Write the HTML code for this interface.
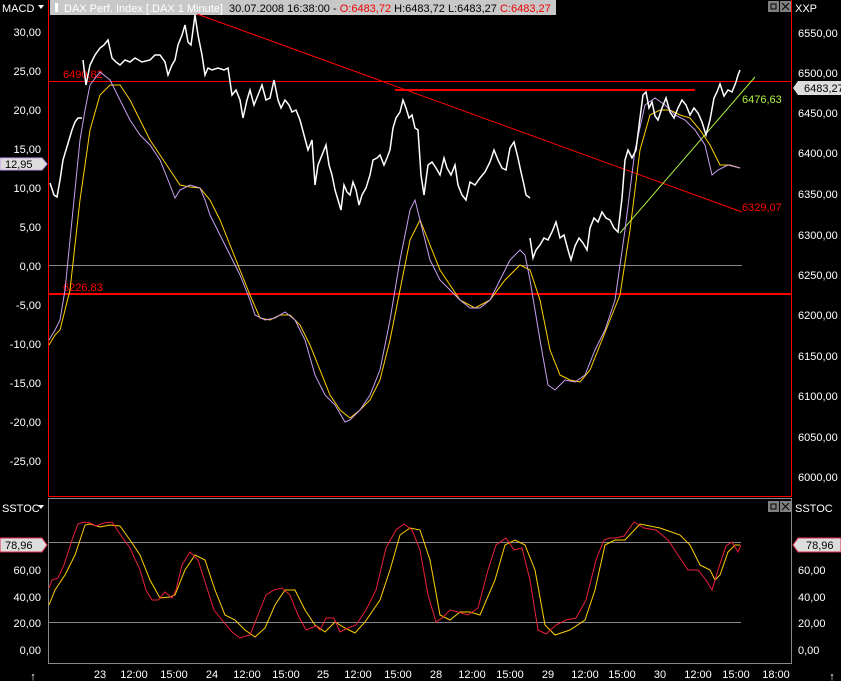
<!DOCTYPE html><html><head><style>
body{margin:0;background:#000;width:841px;height:681px;overflow:hidden;font-family:"Liberation Sans",sans-serif}
svg{display:block}
</style></head><body>
<svg width="841" height="681" xmlns="http://www.w3.org/2000/svg" font-family="Liberation Sans, sans-serif" font-size="11">
<rect width="841" height="681" fill="#000"/>
<!-- title bar -->
<rect x="50" y="0" width="506" height="15" fill="#c8c8c8"/>
<rect x="55" y="3" width="3" height="9" fill="#fff"/>
<text x="64" y="12" fill="#fff">DAX Perf. Index [.DAX  1 Minute]</text>
<text x="229" y="12" fill="#000">30.07.2008 16:38:00 - <tspan fill="#e00">O:6483,72</tspan> H:6483,72 L:6483,27 <tspan fill="#e00">C:6483,27</tspan></text>
<text x="2" y="12" fill="#fff">MACD</text><path d="M38 5h6l-3 4z" fill="#fff"/>
<text x="795" y="12" fill="#fff">XXP</text>
<rect x="768" y="1" width="11" height="11" fill="#808080"/><rect x="771" y="4" width="5" height="5" fill="none" stroke="#000"/>
<rect x="780" y="1" width="11" height="11" fill="#808080"/><path d="M782 3l7 7M789 3l-7 7" stroke="#000"/>
<!-- borders -->
<line x1="48.5" y1="0" x2="48.5" y2="497" stroke="#f00"/>
<line x1="791.5" y1="0" x2="791.5" y2="497" stroke="#f00"/>
<line x1="48" y1="496.5" x2="792" y2="496.5" stroke="#f00"/>
<line x1="48" y1="498.5" x2="792" y2="498.5" stroke="#888"/>
<line x1="48.5" y1="499" x2="48.5" y2="664" stroke="#888"/>
<line x1="791.5" y1="499" x2="791.5" y2="664" stroke="#888"/>
<line x1="48" y1="663.5" x2="792" y2="663.5" stroke="#888"/>
<!-- left axis labels -->
<g fill="#fff" text-anchor="end">
<text x="41" y="36">30,00</text><text x="41" y="75">25,00</text><text x="41" y="114">20,00</text><text x="41" y="153">15,00</text>
<text x="41" y="192">10,00</text><text x="41" y="231">5,00</text><text x="41" y="270">0,00</text><text x="41" y="309">-5,00</text>
<text x="41" y="348">-10,00</text><text x="41" y="387">-15,00</text><text x="41" y="426">-20,00</text><text x="41" y="465">-25,00</text>
<text x="41" y="574">60,00</text><text x="41" y="601">40,00</text><text x="41" y="627">20,00</text><text x="41" y="654">0,00</text>
</g>
<g fill="#fff">
<text x="798" y="37">6550,00</text><text x="798" y="77">6500,00</text><text x="798" y="117">6450,00</text><text x="798" y="157">6400,00</text>
<text x="798" y="198">6350,00</text><text x="798" y="239">6300,00</text><text x="798" y="279">6250,00</text><text x="798" y="319">6200,00</text>
<text x="798" y="360">6150,00</text><text x="798" y="400">6100,00</text><text x="798" y="441">6050,00</text><text x="798" y="481">6000,00</text>
<text x="798" y="574">60,00</text><text x="798" y="601">40,00</text><text x="798" y="627">20,00</text><text x="798" y="654">0,00</text>
<text x="2" y="512">SSTOC</text><text x="795" y="512">SSTOC</text>
</g>
<path d="M38 505h6l-3 4z" fill="#fff"/>
<rect x="768" y="501" width="11" height="11" fill="#808080"/><rect x="771" y="504" width="5" height="5" fill="none" stroke="#000"/>
<rect x="780" y="501" width="11" height="11" fill="#808080"/><path d="M782 503l7 7M789 503l-7 7" stroke="#000"/>
<!-- value tags -->
<path d="M0 158h42l5 6-5 6H0z" fill="#ddd" stroke="#c8a0f0"/><text x="5" y="168" fill="#000">12,95</text>
<path d="M0 538h42l5 7-5 7H0z" fill="#ddd" stroke="#e03050"/><text x="5" y="549" fill="#000">78,96</text>
<path d="M798 81h43v14h-43l-5-7z" fill="#ddd"/><text x="804" y="92" fill="#000">6483,27</text>
<path d="M798 538h43v14h-43l-5-7z" fill="#ddd" stroke="#e03050"/><text x="806" y="549" fill="#000">78,96</text>
<!-- x axis -->
<g fill="#fff" text-anchor="middle">
<text x="100" y="678">23</text><text x="134" y="678">12:00</text><text x="174" y="678">15:00</text>
<text x="212" y="678">24</text><text x="247" y="678">12:00</text><text x="286" y="678">15:00</text>
<text x="323" y="678">25</text><text x="358" y="678">12:00</text><text x="398" y="678">15:00</text>
<text x="436" y="678">28</text><text x="472" y="678">12:00</text><text x="510" y="678">15:00</text>
<text x="548" y="678">29</text><text x="585" y="678">12:00</text><text x="622" y="678">15:00</text>
<text x="660" y="678">30</text><text x="698" y="678">12:00</text><text x="736" y="678">15:00</text><text x="776" y="678">18:00</text>
<text x="33" y="680">↑</text><text x="832" y="680">↑</text>
</g>
<!-- grid lines -->
<line x1="49" y1="265.5" x2="742" y2="265.5" stroke="#888"/>
<line x1="49" y1="542.5" x2="741" y2="542.5" stroke="#888"/>
<line x1="49" y1="622.5" x2="741" y2="622.5" stroke="#888"/>
<!-- red lines -->
<line x1="49" y1="81.5" x2="791" y2="81.5" stroke="#f00"/>
<line x1="49" y1="294" x2="791" y2="294" stroke="#f00" stroke-width="2"/>
<line x1="395" y1="90" x2="695" y2="90" stroke="#f00" stroke-width="2"/>
<line x1="197" y1="14" x2="742" y2="212" stroke="#f00"/>
<line x1="620" y1="233" x2="755" y2="77" stroke="#b0f040"/>
<text x="63" y="78" fill="#f00">6490,82</text>
<text x="63" y="291" fill="#f00">6226,83</text>
<text x="742" y="211" fill="#f00">6329,07</text>
<text x="742" y="103" fill="#b0f040">6476,63</text>
<!-- MACD lines -->
<polyline fill="none" stroke="#ffd000" points="49,345 55,335 60,330 70,290 80,200 90,130 100,95 110,85 120,85 130,100 140,120 150,140 160,155 170,170 180,185 190,187 200,188 210,200 220,220 230,245 240,270 250,295 260,318 270,320 280,315 290,315 300,325 310,345 320,370 330,395 340,410 350,418 360,410 370,400 380,380 390,340 400,290 410,240 420,220 430,245 440,270 450,285 460,300 475,308 490,300 505,280 520,265 530,270 540,300 550,350 560,375 570,380 580,382 590,370 600,345 610,320 620,295 630,230 640,150 650,115 660,110 670,110 680,115 690,118 700,130 710,145 720,165 730,165 740,168"/>
<polyline fill="none" stroke="#c8a0f0" points="49,340 55,330 60,320 65,290 70,240 75,190 80,140 85,110 90,85 100,72 110,80 120,100 130,120 140,135 150,145 160,160 170,185 175,198 180,190 190,185 200,188 205,200 210,215 220,235 230,255 240,275 250,300 255,315 265,320 275,318 285,312 295,320 305,340 315,375 325,395 335,405 345,422 350,420 360,410 370,395 380,370 390,320 400,260 410,210 415,200 420,220 430,260 440,280 450,290 460,300 470,308 480,308 490,300 500,280 510,260 520,250 525,255 530,280 540,340 548,385 555,390 565,380 575,382 585,375 595,350 605,330 615,300 625,230 635,150 645,105 655,98 665,105 675,115 685,120 695,130 705,145 712,175 718,170 728,165 740,168"/>
<!-- price -->
<g fill="none" stroke="#fff" stroke-width="1.5">
<polyline points="50,183 54,195 57,197 60,180 63,160 66,150 69,140 72,130 75,122 78,118 82,118"/>
<polyline points="83,60 86,85 90,65 95,55 100,48 104,45 108,40 112,58 116,62 120,65 125,60 130,62 135,58 142,62 150,60 155,55 160,55 165,62 168,75 172,65 175,60 178,45 182,35 185,25 188,42 191,45 195,15 198,35 202,55 205,75 208,68 212,70 218,68 224,70 228,68 232,95 236,90 240,100 243,118 247,100 250,90 254,105 258,95 262,85 266,100 270,98 274,80 278,100 281,108 285,100 289,105 292,112 296,110 300,120 304,135 308,150 312,140 315,185 318,165 322,155 326,145 329,165 332,175 335,190 338,200 341,210 344,185 347,192 350,195 353,182 356,190 359,205 362,195 366,188 370,175 373,160 377,158 380,155 384,165 387,158 390,150 393,128 396,118 400,112 403,100 406,108 409,118 412,115 415,128 418,130 421,175 424,195 428,165 432,162 436,168 440,175 444,158 447,168 451,175 455,165 458,185 462,195 466,200 470,182 475,185 480,178 485,172 490,162 494,150 498,160 502,168 506,170 510,148 514,142 518,158 521,172 524,185 526,195 530,198"/>
<polyline points="530,238 533,258 536,250 540,245 544,238 548,240 552,232 556,222 560,238 564,235 568,250 571,260 575,246 579,238 583,243 587,250 590,228 594,218 598,222 602,212 606,218 610,220 614,228 618,232 622,198 625,160 628,150 632,158 636,150 640,118 643,95 646,92 649,108 652,102 655,116 658,120 662,108 666,98 670,112 674,118 678,108 682,100 686,105 690,115 694,108 698,113 702,122 706,135 710,120 714,98 717,92 720,84 724,96 728,90 732,92 736,82 738,75 740,70"/>
</g>
<!-- SSTOC -->
<polyline fill="none" stroke="#ffd000" points="49,605 55,590 65,575 75,555 85,525 90,524 100,527 110,525 120,526 130,540 140,555 150,580 160,598 170,597 175,595 185,570 195,555 205,560 215,590 225,615 235,620 245,630 255,637 265,628 275,605 285,590 295,590 305,610 315,625 325,632 335,622 345,628 355,633 365,622 380,600 390,570 400,535 410,528 420,530 430,560 440,615 450,620 460,612 470,612 480,615 495,580 505,545 515,540 525,545 535,570 545,625 555,635 570,630 585,620 595,590 605,545 615,540 625,540 640,524 660,528 680,535 690,545 700,565 710,570 715,580 720,575 728,552 735,545 740,545"/>
<polyline fill="none" stroke="#e8203c" points="49,588 52,580 58,578 64,565 72,540 78,524 84,522 90,523 96,526 104,523 112,522 120,534 130,548 140,570 146,590 152,600 158,600 165,592 172,598 176,590 182,565 190,552 198,560 206,585 214,610 222,620 232,632 240,638 250,635 258,615 266,595 274,590 282,588 290,595 298,615 306,630 316,626 320,630 326,618 334,618 340,632 348,628 356,625 366,610 376,590 386,548 396,530 404,524 412,530 420,550 428,595 436,622 442,618 450,610 458,612 468,615 478,608 488,570 496,545 506,538 514,550 522,548 530,580 538,630 546,634 556,625 566,620 576,618 586,600 596,560 604,540 610,538 616,538 624,536 634,522 644,528 656,530 668,540 678,555 688,570 698,570 706,580 712,590 718,570 726,546 732,542 738,552 741,545"/>
</svg>
</body></html>
